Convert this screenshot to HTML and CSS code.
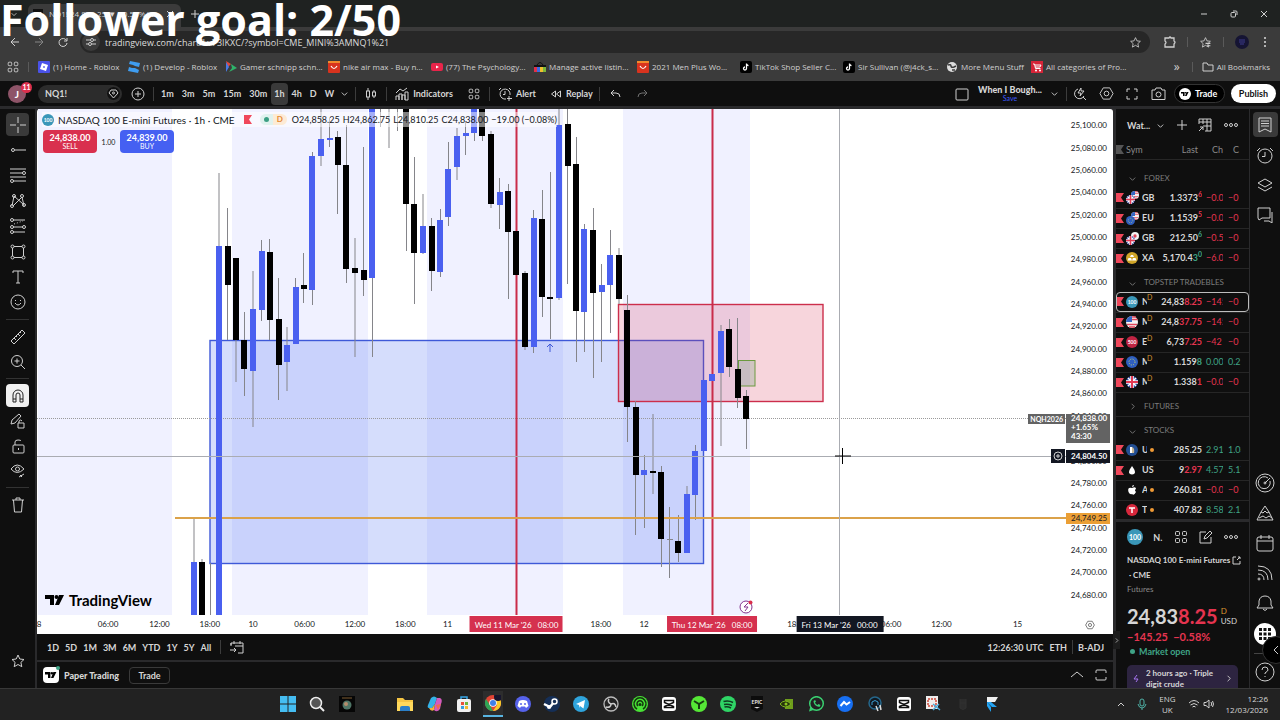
FILE: index.html
```
<!DOCTYPE html>
<html lang="en">
	<head>
		<meta charset="utf-8">
		<title>NQ1! 24,838.25 ▼ −0.58%</title>
		<link rel="stylesheet" href="styles.css">
	</head>
	<body>
		<svg class="defs" width="0" height="0">
			<symbol id="chevron" viewBox="0 0 10 10"><path d="M2 4l3 3 3-3"/></symbol>
			<symbol id="chevron_right" viewBox="0 0 10 10"><path d="M4 2l3 3-3 3"/></symbol>
			<symbol id="dots" viewBox="0 0 16 16"><circle cx="3" cy="8" r="1.5"/><circle cx="8" cy="8" r="1.5"/><circle cx="13" cy="8" r="1.5"/></symbol>
			<symbol id="grid" viewBox="0 0 16 16"><rect x="2.500" y="2.500" width="4" height="4" rx="1"/><rect x="9.500" y="2.500" width="4" height="4" rx="1"/><rect x="2.500" y="9.500" width="4" height="4" rx="1"/><rect x="9.500" y="9.500" width="4" height="4" rx="1"/></symbol>
			<symbol id="star" viewBox="0 0 16 16"><path d="M8 2l1.800 4 4.200.500-3.100 2.900.900 4.300L8 11.500l-3.800 2.200.900-4.300L2 6.500 6.200 6z"/></symbol>
			<symbol id="settings" viewBox="0 0 16 16"><path d="M4.500 2h7L15 8l-3.500 6h-7L1 8z"/><circle cx="8" cy="8" r="2.500"/></symbol>
			<symbol id="tv" viewBox="0 0 20 12"><path d="M0 1h9v10H5V5H0zM14 11h-4l4-10h5z"/><circle cx="11.500" cy="3" r="2"/></symbol>
			<symbol id="flag" viewBox="0 0 8 9"><path d="M0 0h8L5 4.500 8 9H0z"/></symbol>
			<symbol id="tiktok" viewBox="0 0 12 12"><rect width="12" height="12" rx="2" fill="#000"/><path d="M6.500 2.500v5a1.500 1.500 0 1 1-1.500-1.500M6.500 3q.500 1.500 2 1.700" fill="none" stroke="#fff" stroke-width="1.300"/></symbol>
			<symbol id="ali" viewBox="0 0 12 12"><rect width="12" height="12" rx="1" fill="#d8331e"/><path d="M0 0h12v2H0z" fill="#f08a2c"/><path d="M3 5q3 5 6 0" fill="none" stroke="#fff" stroke-width="1.200"/></symbol>
			<symbol id="uk" viewBox="0 0 12 12"><circle cx="6" cy="6" r="6" fill="#2b4aa0"/><path d="M2 2l8 8M10 2l-8 8" stroke="#fff" stroke-width="1.500"/><path d="M6 0v12M0 6h12" stroke="#fff" stroke-width="3.500"/><path d="M6 0v12M0 6h12" stroke="#e23b55" stroke-width="2"/></symbol>
			<symbol id="eu" viewBox="0 0 12 12"><circle cx="6" cy="6" r="6" fill="#2f5fc0"/><circle cx="6" cy="6" r="3" fill="none" stroke="#c9d36a" stroke-width="1" stroke-dasharray="1 1.400"/></symbol>
			<symbol id="us" viewBox="0 0 12 12"><circle cx="6" cy="6" r="6" fill="#f4f4f4"/><path d="M6 1h4M6 3.500h5.500M1 8.500h10M3 11h6" stroke="#e0465a" stroke-width="1.300"/><path d="M6 0v6H0a6 6 0 0 1 6-6" fill="#3567c4"/></symbol>
			<symbol id="jp" viewBox="0 0 12 12"><circle cx="6" cy="6" r="6" fill="#f4f4f4"/><circle cx="6" cy="6" r="2.500" fill="#e0465a"/></symbol>
			<symbol id="capcut" viewBox="0 0 16 16"><rect x="1" y="1" width="14" height="14" rx="3" fill="#fff"/><path d="M12.500 5.500V4.500h-9v2l9 4v1h-9v-1l9-4z" fill="none" stroke="#111" stroke-width="1.500"/></symbol>
		</svg>

		<p class="goal">Follower goal: 2/50</p>

		<div class="tabs">
			<span class="tab_search"><svg width="8" height="8"><use href="#chevron"/></svg></span>
			<div class="tab">
				<span class="tab_icon"><svg width="8" height="6"><use href="#tv"/></svg></span>
				<span class="tab_title">NQ1! 24,838.25 ▼ −0.58% Wi...</span>
				<button class="plain" aria-label="Close tab"><svg width="8" height="8" viewBox="0 0 8 8"><path d="M1 1l6 6M7 1L1 7"/></svg></button>
			</div>
			<button class="plain new_tab" aria-label="New tab"><svg width="8" height="8" viewBox="0 0 8 8"><path d="M4 0v8M0 4h8"/></svg></button>
			<div class="window_buttons">
				<button class="plain" aria-label="Minimise"><svg width="8" height="8" viewBox="0 0 8 8"><path d="M1 4h6"/></svg></button>
				<button class="plain" aria-label="Restore"><svg width="8" height="8" viewBox="0 0 8 8"><rect x="1" y="2.500" width="4.500" height="4.500" rx="1"/><path d="M3 1h3q1 0 1 1v3"/></svg></button>
				<button class="plain" aria-label="Close"><svg width="8" height="8" viewBox="0 0 8 8"><path d="M1 1l6 6M7 1L1 7"/></svg></button>
			</div>
		</div>

		<div class="toolbar">
			<button class="plain" aria-label="Back"><svg width="10" height="10" viewBox="0 0 10 10"><path d="M9 5H1M5 1L1 5l4 4"/></svg></button>
			<button class="plain dim" aria-label="Forward"><svg width="10" height="10" viewBox="0 0 10 10"><path d="M1 5h8M5 1l4 4-4 4"/></svg></button>
			<button class="plain" aria-label="Reload"><svg width="10" height="10" viewBox="0 0 10 10"><path d="M8.500 3.500A4 4 0 1 0 9 6M9 1v3H6"/></svg></button>
			<div class="address">
				<span class="site_info"><svg width="10" height="10" viewBox="0 0 10 10"><path d="M0 3h4M8 3h2M0 7h2M6 7h4"/><circle cx="6" cy="3" r="1.500"/><circle cx="4" cy="7" r="1.500"/></svg></span>
				<input aria-label="Address" value="tradingview.com/chart/Lv73IKXC/?symbol=CME_MINI%3AMNQ1%21">
				<svg width="13" height="13"><use href="#star"/></svg>
			</div>
			<div class="extensions">
				<svg width="12" height="12" viewBox="0 0 12 12"><path d="M1 2h4q1-2 2 0h3v3q2 1 0 3v3H1V8q2-1.500 0-3z" stroke-width="1.300"/></svg>
				<i class="rule"></i>
				<svg width="13" height="13" viewBox="0 0 16 16"><use href="#star"/><path d="M8 9h6M10 12h4" stroke-width="1.500"/></svg>
				<i class="rule"></i>
				<svg width="14" height="14" viewBox="0 0 14 14"><circle cx="7" cy="7" r="7" fill="#151433" stroke="none"/><path d="M4 5h6M4 7h6M5 9h4" stroke="#3d3a8c"/></svg>
				<svg width="4" height="12" viewBox="0 0 4 12"><g fill="#ddd" stroke="none"><circle cx="2" cy="2" r="1"/><circle cx="2" cy="6" r="1"/><circle cx="2" cy="10" r="1"/></g></svg>
			</div>
		</div>

		<nav class="bookmarks">
			<svg class="apps" width="14" height="14"><use href="#grid"/></svg>
			<i class="rule"></i>
			<a href="#"><svg width="12" height="12" viewBox="0 0 12 12"><rect width="12" height="12" rx="1" fill="#4a52e8"/><path d="M4 2l6 2-2 6-6-2z" fill="#fff"/><path d="M5.500 5l1.500.500-.500 1.500L5 6.500z" fill="#4a52e8"/></svg>(1) Home - Roblox</a>
			<a href="#"><svg width="12" height="12" viewBox="0 0 12 12"><path d="M2 0l10 2-1 4-4-1-2-1-4-1zM1 6l3 1h3l4 2-1 3L0 10z" fill="#3f9df0"/></svg>(1) Develop - Roblox</a>
			<a href="#"><svg width="12" height="12" viewBox="0 0 12 12"><path d="M1 0l5 3-3 3z" fill="#e2483d"/><path d="M1 1v10l3-5z" fill="#4a7be8"/><path d="M6 3l6 4-8 4 3-4z" fill="#2fb36a"/></svg>Gamer schnipp schn...</a>
			<a href="#"><svg width="12" height="12"><use href="#ali"/></svg>nike air max - Buy n...</a>
			<a href="#"><svg width="12" height="12" viewBox="0 0 12 12"><rect y="2" width="12" height="8" rx="2" fill="#e8244a"/><path d="M5 4.500l3 1.500-3 1.500z" fill="#fff"/></svg>(77) The Psychology...</a>
			<a href="#"><svg width="12" height="12" viewBox="0 0 12 12"><path d="M0 4h12v2H0z" fill="#111"/><path d="M3 4q3-5 6 0" fill="none" stroke="#111"/><path d="M0 6h3v5H0z" fill="#e0304a"/><path d="M3 6h3v5H3z" fill="#3a6be0"/><path d="M6 6h3v5H6z" fill="#f0c030"/><path d="M9 6h3v5H9z" fill="#7cb83a"/></svg>Manage active listin...</a>
			<a href="#"><svg width="12" height="12"><use href="#ali"/></svg>2021 Men Plus Wo...</a>
			<a href="#"><svg width="12" height="12"><use href="#tiktok"/></svg>TikTok Shop Seller C...</a>
			<a href="#"><svg width="12" height="12"><use href="#tiktok"/></svg>Sir Sullivan (@j4ck_s...</a>
			<a class="short" href="#"><svg width="12" height="12" viewBox="0 0 12 12"><circle cx="6" cy="6" r="5" fill="#ddd"/><path d="M2 4q3-1 3 1t3 1l2-1M6 9l3 0" fill="none" stroke="#3b3b3b" stroke-width="1.500"/></svg>More Menu Stuff</a>
			<a href="#"><svg width="12" height="12" viewBox="0 0 12 12"><rect width="12" height="12" fill="#d62438"/><path d="M2 3h1.500l1 4.500h5M4 4h6L9 6H4" fill="none" stroke="#fff"/><circle cx="5" cy="9.500" r="1" fill="#fff"/><circle cx="9" cy="9.500" r="1" fill="#fff"/></svg>All categories of Pro...</a>
			<span class="more">»</span>
			<i class="rule"></i>
			<a class="all" href="#"><svg class="line" width="12" height="12" viewBox="0 0 12 12"><path d="M1 2h4l1 2h5v6H1z"/></svg>All Bookmarks</a>
		</nav>

		<header class="header">
			<div class="avatar">J<span class="badge">11</span></div>
			<button class="symbol">NQ1!<svg width="15" height="15" viewBox="0 0 15 15"><circle cx="7.500" cy="7.500" r="7" fill="#111" stroke="#333"/><path d="M5 4h5l2 3-4.500 5L3 7z"/><circle cx="7.500" cy="7" r="1"/></svg></button>
			<button class="icon_button" aria-label="Compare"><svg width="14" height="14" viewBox="0 0 14 14"><circle cx="7" cy="7" r="6"/><path d="M7 4v6M4 7h6"/></svg></button>
			<i class="rule"></i>
			<div class="intervals">
				<button>1m</button><button>3m</button><button>5m</button><button>15m</button><button>30m</button><button class="active">1h</button><button>4h</button><button>D</button><button>W</button>
				<button class="more_intervals" aria-label="More intervals"><svg width="9" height="9"><use href="#chevron"/></svg></button>
			</div>
			<i class="rule"></i>
			<button class="icon_button wide" aria-label="Chart type"><svg width="14" height="14" viewBox="0 0 14 14"><rect x="2.500" y="4" width="3" height="6"/><rect x="8.500" y="5" width="3" height="4"/><path d="M4 1v3M4 10v3M10 3v2M10 9v2"/></svg></button>
			<i class="rule"></i>
			<button class="text_button"><svg width="14" height="14" viewBox="0 0 14 14"><path d="M1 13V9h3v4M4 13V7h3v6M7 13V8h3v5M10 13V5h3v8zM1 6l4-4 3 2 4-3"/></svg>Indicators</button>
			<button class="icon_button wide" aria-label="Templates"><svg width="14" height="14"><use href="#grid"/></svg></button>
			<i class="rule"></i>
			<button class="text_button"><svg width="14" height="14" viewBox="0 0 14 14"><path d="M12 8A5 5 0 1 0 8 12M7 4v3.500H5M1 3l2-2M11 1l2 2M11 9v5M9 11.500h5"/></svg>Alert</button>
			<button class="text_button"><svg width="12" height="12" viewBox="0 0 12 12"><path d="M5.500 3v6L1.500 6zM10.500 3v6l-4-3z"/></svg>Replay</button>
			<i class="rule"></i>
			<button class="icon_button wide" aria-label="Undo"><svg width="12" height="12" viewBox="0 0 12 12"><path d="M5 2L2 5l3 3M2 5h5q4 0 4 4"/></svg></button>
			<button class="icon_button dim" aria-label="Redo"><svg width="12" height="12" viewBox="0 0 12 12"><path d="M7 2l3 3-3 3M10 5H5q-4 0-4 4"/></svg></button>
			<div class="header_right">
				<svg width="14" height="14" viewBox="0 0 14 14"><rect x="1" y="2" width="12" height="11" rx="1"/></svg>
				<div class="layout_name"><b>When I Bough...</b><a href="#">Save</a></div>
				<svg width="9" height="9"><use href="#chevron"/></svg>
				<i class="rule"></i>
				<button class="icon_button" aria-label="Quick search"><svg width="14" height="14" viewBox="0 0 14 14"><path d="M5 2a5 5 0 1 0 6 7M10 10l3 3M8 1L5 6h3l-1 3 4-5H8z"/></svg></button>
				<button class="icon_button" aria-label="Settings"><svg width="15" height="15"><use href="#settings"/></svg></button>
				<button class="icon_button" aria-label="Fullscreen"><svg width="12" height="12" viewBox="0 0 12 12"><path d="M1 4V1h3M8 1h3v3M11 8v3H8M4 11H1V8"/></svg></button>
				<button class="icon_button" aria-label="Snapshot"><svg width="15" height="14" viewBox="0 0 15 14"><path d="M1 3h3l1-2h5l1 2h3v9.500H1z"/><circle cx="7.500" cy="7.500" r="2.500"/></svg></button>
				<button class="trade"><span><svg width="8" height="6"><use href="#tv"/></svg></span>Trade</button>
				<button class="publish">Publish</button>
			</div>
		</header>

		<main class="app">
			<aside class="tools">
				<div class="tool_group drawing">
					<button class="active" aria-label="Cross"><svg width="16" height="16" viewBox="0 0 16 16"><path d="M8 0v6M8 10v6M0 8h6M10 8h6"/></svg></button>
					<button aria-label="Trend line"><svg width="16" height="16" viewBox="0 0 16 16"><circle cx="3" cy="8" r="1.500"/><path d="M5 8h11"/></svg></button>
					<button aria-label="Fib"><svg width="16" height="16" viewBox="0 0 16 16"><path d="M0 2h16M0 6h13M0 10h16M3 14h13"/><circle cx="14" cy="6" r="1.500"/><circle cx="2" cy="14" r="1.500"/></svg></button>
					<button aria-label="Patterns"><svg width="16" height="16" viewBox="0 0 16 16"><path d="M2 13L4 3l9 8M3 13l9-9 2 9"/><circle cx="2" cy="13" r="1.500"/><circle cx="4" cy="3" r="1.500"/><circle cx="12" cy="3" r="1.500"/><circle cx="14" cy="12" r="1.500"/></svg></button>
					<button aria-label="Forecast"><svg width="16" height="16" viewBox="0 0 16 16"><path d="M3 2h12M3 9h10M3 14h12"/><path d="M4 6l9-3" stroke-dasharray="1 2"/><circle cx="2" cy="2" r="1.500"/><circle cx="2" cy="9" r="1.500"/><circle cx="14" cy="9" r="1.500"/><circle cx="2" cy="14" r="1.500"/></svg></button>
					<button aria-label="Shapes"><svg width="16" height="16" viewBox="0 0 16 16"><rect x="2.500" y="2.500" width="11" height="11"/><g fill="#0f0f0f"><circle cx="2.500" cy="2.500" r="1.500"/><circle cx="13.500" cy="2.500" r="1.500"/><circle cx="2.500" cy="13.500" r="1.500"/><circle cx="13.500" cy="13.500" r="1.500"/></g></svg></button>
					<button aria-label="Text"><svg width="16" height="16" viewBox="0 0 16 16"><path d="M3 4V2h10v2M8 2v12M6 14h4"/></svg></button>
					<button aria-label="Icons"><svg width="16" height="16" viewBox="0 0 16 16"><circle cx="8" cy="8" r="7"/><path d="M5 9q3 4 6 0M5.500 6v1M10.500 6v1"/></svg></button>
				</div>
				<div class="tool_group">
					<button aria-label="Measure"><svg width="16" height="16" viewBox="0 0 16 16"><path d="M1 12L12 1l3 3L4 15zM4 9l2 2M6 7l1 1M8 5l2 2M10 3l1 1"/></svg></button>
					<button aria-label="Zoom"><svg width="16" height="16" viewBox="0 0 16 16"><circle cx="7" cy="7" r="5.500"/><path d="M11 11l4 4M7 4.500v5M4.500 7h5"/></svg></button>
				</div>
				<div class="tool_group locks">
					<button class="magnet" aria-label="Magnet"><svg width="16" height="16" viewBox="0 0 16 16"><path d="M3 14V7a5 5 0 0 1 10 0v7h-3V7a2 2 0 0 0-4 0v7zM3 11h3M10 11h3"/></svg></button>
					<button aria-label="Stay in drawing mode"><svg width="16" height="16" viewBox="0 0 16 16"><path d="M1 11l1-4 7-6 2 2-6 7zM8 10h6v5H8zM9 10V8q2-2 3 0"/></svg></button>
					<button aria-label="Lock"><svg width="16" height="16" viewBox="0 0 16 16"><rect x="3" y="7" width="11" height="8" rx="1"/><path d="M5 7V4q0-2 3-2t3 1M8.500 10v2" /></svg></button>
					<button aria-label="Hide"><svg width="16" height="16" viewBox="0 0 16 16"><path d="M1 6q6-8 13 0-7 7-13 0zM9 14l5-3M10 12l2 2"/><circle cx="7.500" cy="6" r="2"/></svg></button>
				</div>
				<div class="tool_group">
					<button aria-label="Remove"><svg width="16" height="16" viewBox="0 0 16 16"><path d="M2 3h12M6 3V1h4v2M3.500 3l1 12h7l1-12"/></svg></button>
				</div>
				<button class="favourite" aria-label="Favourites"><svg width="16" height="16"><use href="#star"/></svg></button>
			</aside>

			<div class="center">
				<section class="chart">
					<div class="plot">
						<svg class="canvas" viewBox="37 109 1029 506" preserveAspectRatio="none">
							<path class="session" d="M38 109h134v506h-134zM232 109h136v506h-136zM427 109h136v506h-136zM623 109h127v506h-127z"/>
							<rect class="demand" x="210" y="340.500" width="493.500" height="223"/>
							<rect class="supply" x="618.500" y="304.500" width="204.500" height="97"/>
							<rect class="entry" x="738.500" y="360.500" width="16.500" height="25.500"/>
							<path class="last_price" d="M37 418.500h1029"/>
							<path class="wick" d="M194 518v97M202 559v56M210.500 563v52M219 173v73M227.500 208v132M236 258v124M244.500 312v84M253 271v156M261.500 240v81M269.500 239v101M278.500 278v122M287 327v64M295.500 278v66M303.500 253v50M312.500 152v153M321 109v57M329.500 118v29M337.500 131v83M346.500 125v158M355 238v119M363.500 147v149M372.500 109v248M380.500 109v18M389 109v39M397.500 109v22M406.500 109v142M414.500 157v147M423 194v60M431.500 218v73M440.500 209v68M448.500 142v84M457 128v52M465.500 121v34M474.500 109v32M482.500 109v32M491 131v77M499.500 178v51M508.500 184v115M525 271v79M533.500 210v143M542.500 190v127M550.500 172v167M559 109v191M567.500 109v175M576.500 137v225M584.500 224v128M593.500 208v170M601.500 264v98M610.500 230v103M619 248v56M627.500 295v147M635.500 401v134M644.500 455v73M653 414v80M661.500 466v101M669.500 507v71M678.500 515v47M687 486v12M695.500 445v75M721 325v121M729.500 319v58M737.500 318v90M746.500 390v59M667 539.500h6"/>
							<path class="vline" d="M516.500 109v506M712.500 109v506"/>
							<path class="hline" d="M175 518h891"/>
							<path class="up" d="M194 562v53M219 246v369M253 309v62M262 251v59M287 345v17M296 287v57M312 156v134M321 139v17M330 138v2M372 109v169M423 226v27M440 220v52M448 169v48M457 136v31M466 133v3M474 109v24M500 192v13M534 218v129M559 125v173M584 229v83M602 285v7M610 255v30M644 470v5M687 494v59M695 451v44M704 380v71M712 374v7M721 331v42"/>
							<path class="down" d="M202 562v53M228 246v39M236 258v82M244 340v29M270 252v68M279 319v46M304 285v4M338 137v28M346 165v104M355 268v5M364 270v10M406 109v95M414 204v49M432 226v45M482 109v27M491 134v70M508 191v41M516 231v44M525 273v74M542 219v78M550 297v2M568 124v42M576 164v147M593 230v63M619 255v44M627 310v97M636 407v68M653 471v2M661 472v67M678 541v12M729 329v38M738 369v29M746 396v23"/>
							<path class="crosshair" d="M37 456.500h1029M839.500 109v506"/>
							<path class="arrow" d="M550 352v-8M547 347l3-3 3 3"/>
							<path class="cursor" d="M835 456h16M842.500 448v16"/>
							<g class="event"><circle cx="746" cy="607" r="6"/><path d="M748 603l-4 4h4l-3 4"/><circle class="event_dot" cx="750.500" cy="602.500" r="2"/></g>
						</svg>
						<div class="legend">
							<span class="coin">100</span>
							<b class="legend_title">NASDAQ 100 E-mini Futures · 1h · CME</b>
							<svg class="flag" width="8" height="9"><use href="#flag"/></svg>
							<span class="status"><i></i>D</span>
							<span class="ohlc"><span>O24,858.25</span><span>H24,862.75</span><span>L24,810.25</span><span>C24,838.00</span><span>−19.00 (−0.08%)</span></span>
						</div>
						<div class="orders">
							<button class="sell"><b>24,838.00</b>SELL</button>
							<span>1.00</span>
							<button class="buy"><b>24,839.00</b>BUY</button>
						</div>
						<div class="brand"><svg width="20" height="12"><use href="#tv"/></svg>TradingView</div>
						<span class="contract">NQH2026</span>
						<span class="add_alert"><svg width="10" height="10" viewBox="0 0 10 10"><circle cx="5" cy="5" r="4"/><path d="M5 3v4M3 5h4"/></svg></span>
					</div>
					<div class="price_axis">
						<span>25,100.00</span><span>25,080.00</span><span>25,060.00</span><span>25,040.00</span><span>25,020.00</span><span>25,000.00</span><span>24,980.00</span><span>24,960.00</span><span>24,940.00</span><span>24,920.00</span><span>24,900.00</span><span>24,880.00</span><span>24,860.00</span><span>24,840.00</span><span></span><span>24,800.00</span><span>24,780.00</span><span>24,760.00</span><span>24,740.00</span><span>24,720.00</span><span>24,700.00</span><span>24,680.00</span>
						<div class="price_tag current">24,838.00<br>+1.65%<br>43:30</div>
						<div class="price_tag cross">24,804.50</div>
						<div class="price_tag level">24,749.25</div>
					</div>
					<svg class="time_axis" height="19">
						<text x="0.200%" y="12">8</text><text x="6.900%" y="12">06:00</text><text x="11.900%" y="12">12:00</text><text x="16.800%" y="12">18:00</text><text x="21%" y="12">10</text><text x="26%" y="12">06:00</text><text x="30.900%" y="12">12:00</text><text x="35.800%" y="12">18:00</text><text x="39.900%" y="12">11</text><text x="54.800%" y="12">18:00</text><text x="59%" y="12">12</text><text x="73.900%" y="12">18:00</text><text x="83%" y="12">06:00</text><text x="87.900%" y="12">12:00</text><text x="95.300%" y="12">15</text>
						<svg class="time_tag" x="46.600%"><rect x="-47" y="1" width="93" height="16"/><text y="13">Wed 11 Mar '26 &#160; 08:00</text></svg>
						<svg class="time_tag" x="65.600%"><rect x="-45" y="1" width="90" height="16"/><text y="13">Thu 12 Mar '26 &#160; 08:00</text></svg>
						<svg class="time_tag dark" x="78%"><rect x="-43" y="1" width="87" height="16"/><text y="13">Fri 13 Mar '26 &#160; 00:00</text></svg>
					</svg>
					<div class="axis_settings"><svg width="10" height="10"><use href="#settings"/></svg></div>
				</section>

				<div class="ranges">
					<button>1D</button><button>5D</button><button>1M</button><button>3M</button><button>6M</button><button>YTD</button><button>1Y</button><button>5Y</button><button>All</button>
					<i class="rule"></i>
					<button aria-label="Go to"><svg width="14" height="14" viewBox="0 0 14 14"><path d="M1 6V3h12v10H8M1 3v2M4 1v3M10 1v3M5 6h8M0 10h6M4 8l2 2-2 2"/></svg></button>
					<div class="ranges_right"><button>12:26:30 UTC</button><button>ETH</button><i class="rule"></i><button>B-ADJ</button></div>
				</div>
				<div class="paper">
					<span class="paper_icon"><svg width="12" height="8"><use href="#tv"/></svg><i></i></span>
					<b>Paper Trading</b>
					<button>Trade</button>
					<div class="paper_right">
						<svg width="12" height="12" viewBox="0 0 12 12"><path d="M0 8l6-5 6 5"/></svg>
						<svg width="12" height="12" viewBox="0 0 12 12"><path d="M1 4V2q0-1 1-1h8q1 0 1 1v2M11 8v2q0 1-1 1H2q-1 0-1-1V8"/></svg>
					</div>
				</div>
			</div>

			<aside class="side">
				<div class="watch_header">
					<b>Wat...</b><svg class="list_arrow" width="9" height="9"><use href="#chevron"/></svg>
					<svg width="12" height="12" viewBox="0 0 12 12"><path d="M6 1v10M1 6h10"/></svg>
					<svg width="14" height="14" viewBox="0 0 14 14"><path d="M1 6V1h12v12H7M1 4h12M5 1v5M9 1v12M5 8h8M1 13l4-4M2 9h3v3"/></svg>
					<svg width="16" height="16"><use href="#dots"/></svg>
				</div>
				<table>
					<colgroup><col class="c_flag"><col class="c_icon"><col class="c_name"><col class="c_last"><col class="c_chg"><col class="c_pct"><col></colgroup>
					<thead><tr><th><svg width="8" height="9"><use href="#flag"/></svg></th><th class="sym" colspan="2">Sym</th><th class="last">Last</th><th class="chg">Chg</th><th class="pct">C</th><th></th></tr></thead>
					<tbody>
						<tr class="group open"><td colspan="7"><svg width="9" height="9"><use href="#chevron"/></svg>FOREX</td></tr>
						<tr><td><svg class="flag" width="8" height="9"><use href="#flag"/></svg></td><td><svg width="13" height="13" viewBox="0 0 13 13"><use href="#us" x="5" width="8" height="8"/><use href="#uk" y="4" width="9" height="9"/></svg></td><td>GB</td><td class="last">1.3373<sup class="red">6</sup></td><td class="chg red">−0.00</td><td class="pct red">−0</td><td></td></tr>
						<tr><td><svg class="flag" width="8" height="9"><use href="#flag"/></svg></td><td><svg width="13" height="13" viewBox="0 0 13 13"><use href="#us" x="5" width="8" height="8"/><use href="#eu" y="4" width="9" height="9"/></svg></td><td>EU</td><td class="last">1.1539<sup class="red">5</sup></td><td class="chg red">−0.00</td><td class="pct red">−0</td><td></td></tr>
						<tr><td><svg class="flag" width="8" height="9"><use href="#flag"/></svg></td><td><svg width="13" height="13" viewBox="0 0 13 13"><use href="#jp" x="5" width="8" height="8"/><use href="#uk" y="4" width="9" height="9"/></svg></td><td>GB</td><td class="last">212.50<sup class="green">6</sup></td><td class="chg red">−0.57</td><td class="pct red">−0</td><td></td></tr>
						<tr><td><svg class="flag" width="8" height="9"><use href="#flag"/></svg></td><td><svg width="12" height="12" viewBox="0 0 12 12"><circle cx="6" cy="6" r="6" fill="#d0a528"/><path d="M4 5l1-2h2l1 2zM1.500 8.500l1-2.500h2.500l1 2.500zM6 8.500l1-2.500h2.500l1 2.500z" fill="#fff"/></svg></td><td>XA</td><td class="last">5,170.4<span class="green">3<sup>0</sup></span></td><td class="chg red">−6.00</td><td class="pct red">−0</td><td></td></tr>
						<tr class="group"><td colspan="7"><svg width="9" height="9"><use href="#chevron"/></svg>TOPSTEP TRADEBLES</td></tr>
						<tr class="selected"><td><svg class="flag" width="8" height="9"><use href="#flag"/></svg></td><td><span class="coin">100</span></td><td><span class="cut">N</span><sup class="delay">D</sup></td><td class="last">24,83<span class="red">8.25</span></td><td class="chg red">−145</td><td class="pct red">−0</td><td></td></tr>
						<tr><td><svg class="flag" width="8" height="9"><use href="#flag"/></svg></td><td><svg width="12" height="12"><use href="#us"/></svg></td><td><span class="cut">M</span><sup class="delay">D</sup></td><td class="last">24,8<span class="red">37.75</span></td><td class="chg red">−145</td><td class="pct red">−0</td><td></td></tr>
						<tr><td><svg class="flag" width="8" height="9"><use href="#flag"/></svg></td><td><span class="coin sp">500</span></td><td><span class="cut">E</span><sup class="delay">D</sup></td><td class="last">6,73<span class="red">7.25</span></td><td class="chg red">−42</td><td class="pct red">−0</td><td></td></tr>
						<tr><td><svg class="flag" width="8" height="9"><use href="#flag"/></svg></td><td><svg width="12" height="12"><use href="#eu"/></svg></td><td><span class="cut">M</span><sup class="delay">D</sup></td><td class="last">1.159<span class="green">8</span></td><td class="chg green">0.000</td><td class="pct green">0.2</td><td></td></tr>
						<tr><td><svg class="flag" width="8" height="9"><use href="#flag"/></svg></td><td><svg width="12" height="12"><use href="#uk"/></svg></td><td><span class="cut">M</span><sup class="delay">D</sup></td><td class="last">1.338<span class="red">1</span></td><td class="chg red">−0.00</td><td class="pct red">−0</td><td></td></tr>
						<tr class="group closed"><td colspan="7"><svg width="9" height="9"><use href="#chevron_right"/></svg>FUTURES</td></tr>
						<tr class="group"><td colspan="7"><svg width="9" height="9"><use href="#chevron"/></svg>STOCKS</td></tr>
						<tr><td><svg class="flag" width="8" height="9"><use href="#flag"/></svg></td><td><svg width="12" height="12" viewBox="0 0 12 12"><circle cx="6" cy="6" r="6" fill="#234f94"/><path d="M4 3h2v6H4z" fill="#fff"/><path d="M6 3q3 1 2 6H6z" fill="#c8b896"/></svg></td><td><span class="cut">U</span><i class="dot"></i></td><td class="last">285.25</td><td class="chg green">2.910</td><td class="pct green">1.03</td><td></td></tr>
						<tr><td><svg class="flag" width="8" height="9"><use href="#flag"/></svg></td><td><svg width="12" height="12" viewBox="0 0 12 12"><path d="M6 2q6 8 0 8.500Q0 10 6 2" fill="#fff"/></svg></td><td>US</td><td class="last">9<span class="red">2.97</span></td><td class="chg green">4.570</td><td class="pct green">5.17</td><td></td></tr>
						<tr><td></td><td><svg width="12" height="12" viewBox="0 0 12 12"><path d="M6 4q4-2 4 1-2 1 0 3-2 4-4 2-2 1-3.500-2Q1 3 6 4M6 3q0-2 2-2 0 2-2 2" fill="#fff"/></svg></td><td><span class="cut">A</span><i class="dot"></i></td><td class="last">260.81</td><td class="chg red">−0.02</td><td class="pct red">−0</td><td></td></tr>
						<tr><td></td><td><svg width="12" height="12" viewBox="0 0 12 12"><circle cx="6" cy="6" r="6" fill="#d8273c"/><path d="M3 4h6M6 4v5" stroke="#fff" stroke-width="1.500"/></svg></td><td><span class="cut">T</span><i class="dot"></i></td><td class="last">407.82</td><td class="chg green">8.580</td><td class="pct green">2.15</td><td></td></tr>
					</tbody>
				</table>
				<div class="details">
					<div class="details_header">
						<span class="coin big">100</span><b>N.</b>
						<svg width="16" height="16"><use href="#grid"/></svg>
						<svg width="14" height="14" viewBox="0 0 14 14"><path d="M7 2H1v11h11V7M5 9l1-3 5-5 2 2-5 5z"/></svg>
						<svg width="16" height="16"><use href="#dots"/></svg>
					</div>
					<p class="details_name">NASDAQ 100 E-mini Futures <svg width="9" height="9" viewBox="0 0 9 9"><path d="M4 1H1v7h7V5M6 1h2v2M8 1L5 4"/></svg></p>
					<p class="details_name">&nbsp;· CME</p>
					<p class="details_type">Futures</p>
					<p class="quote">24,83<span class="red">8.25</span><small><i>D</i>USD</small></p>
					<p class="change red">−145.25 &nbsp;−0.58%</p>
					<p class="market green"><i></i>Market open</p>
					<a class="news" href="#"><svg width="9" height="9" viewBox="0 0 9 9"><path d="M5 1L2 5h4L4 8"/></svg><span>2 hours ago · Triple digit crude</span><svg width="9" height="9"><use href="#chevron_right"/></svg></a>
				</div>
				<button class="collapse" aria-label="Collapse"><svg width="7" height="7"><use href="#chevron_right"/></svg></button>
			</aside>

			<aside class="rail">
				<button class="active" aria-label="Watchlist"><svg width="16" height="16" viewBox="0 0 16 16"><path d="M2 1h12v14l-6-3-6 3zM4 4h8M4 6.500h8M4 9h8"/></svg></button>
				<button aria-label="Alerts"><svg width="18" height="18" viewBox="0 0 18 18"><circle cx="9" cy="10" r="7"/><path d="M9 6v4.500H6M1 5l3-3M14 2l3 3"/></svg></button>
				<button aria-label="Object tree"><svg width="16" height="16" viewBox="0 0 16 16"><path d="M8 2l7 4-7 4-7-4zM1 10l7 4 7-4"/></svg></button>
				<button aria-label="Chats"><svg width="16" height="16" viewBox="0 0 16 16"><path d="M1 1h12v10H5l-3 2-1-2zM15 5v11l-3-2H7"/></svg></button>
				<button class="push" aria-label="Screeners"><svg width="20" height="20" viewBox="0 0 20 20"><circle cx="10" cy="10" r="9"/><path d="M13 5a6 6 0 1 0 2 3M10 10l5-5"/><circle cx="10" cy="10" r="1"/></svg></button>
				<button aria-label="Pine"><svg width="18" height="18" viewBox="0 0 18 18"><path d="M9 2l4 6-2 1-2-2-2 2-2-1zM5 8l-4 8h16l-4-8M3 14l4-2 3 2 3-2 3 2"/></svg></button>
				<button aria-label="Calendar"><svg width="18" height="18" viewBox="0 0 18 18"><rect x="1" y="3" width="16" height="14" rx="2"/><path d="M1 7h16M5 1v4M13 1v4"/></svg></button>
				<button aria-label="News"><svg width="16" height="16" viewBox="0 0 16 16"><circle cx="2" cy="14" r="1"/><path d="M1 9q6 0 6 6M1 5q10 0 10 10M1 1q14 0 14 14"/></svg></button>
				<button aria-label="Notifications"><svg width="18" height="18" viewBox="0 0 18 18"><path d="M1 14l2-3V7q1-5 6-5t6 5v4l2 3zM7 15q2 3 4 0"/></svg></button>
				<button class="products" aria-label="Products"><svg width="14" height="14" viewBox="0 0 14 14"><path d="M2.500 1v12M7 1v12M11.500 1v12" stroke-width="3" stroke-dasharray="3 1.500"/></svg></button>
				<i></i>
				<button aria-label="Help"><svg width="20" height="20" viewBox="0 0 20 20"><circle cx="10" cy="10" r="9"/><path d="M7 8q0-3 3-3t3 3q0 1-3 3v1M10 14v1"/></svg></button>
				<span class="drawer"><svg width="10" height="10" viewBox="0 0 10 10"><path d="M7 1L3 5l4 4"/></svg></span>
			</aside>
		</main>

		<footer class="taskbar">
			<div class="apps_list">
				<svg viewBox="0 0 16 16"><path d="M0 0h7.500v7.500H0zM8.500 0H16v7.500H8.500zM0 8.500h7.500V16H0zM8.500 8.500H16V16H8.500z" fill="#45bdf2"/></svg>
				<svg viewBox="0 0 16 16"><circle cx="7" cy="7" r="5.500" fill="#555" stroke="#eee" stroke-width="1.500"/><path d="M11 11l4 4" stroke="#eee" stroke-width="2"/></svg>
				<svg viewBox="0 0 16 16"><path d="M0 0h16v16H0z" fill="#060606"/><circle cx="8" cy="9" r="4.500" fill="#4f7566"/><circle cx="7" cy="8" r="2" fill="#b58d6c"/><path d="M3 2h10" stroke="#7d5a30"/></svg>
				<span></span>
				<svg viewBox="0 0 16 16"><path d="M0 2h6l2 2h8v11H0z" fill="#f5c544"/><path d="M0 6h16v9H0z" fill="#ffd95c"/><path d="M3 15v-3q0-2 2-2h6q2 0 2 2v3z" fill="#2b7fc8"/></svg>
				<svg viewBox="0 0 16 16"><path d="M4 2q3-3 6 0L8 8l-3 4H2Q0 12 1 9z" fill="#34b2e8"/><path d="M10 2h3q3 1 1 6l-1 5q-3 4-6 1l1-6z" fill="#d35bbd"/><path d="M2 12h3l3-4-1 6q-3 2-5-2" fill="#f2b33d"/><path d="M9 9l5-1-3 6z" fill="#f26a4b"/></svg>
				<svg viewBox="0 0 16 16"><path d="M5 4V1h6v3" fill="none" stroke="#38a8e8" stroke-width="1.500"/><rect x="1" y="3" width="14" height="13" rx="2" fill="#f0f0f0"/><path d="M5 6h3v3H5z" fill="#e8503a"/><path d="M9 6h3v3H9z" fill="#6bb83c"/><path d="M5 10h3v3H5z" fill="#38a0e0"/><path d="M9 10h3v3H9z" fill="#f2b82c"/></svg>
				<span class="running"><svg viewBox="0 0 16 16"><circle cx="8" cy="8" r="8" fill="#e24333"/><path d="M1 4l4 6 3 6a8 8 0 0 1-7-12" fill="#2fa455"/><path d="M8 16a8 8 0 0 0 7.500-11H8l4 5z" fill="#f7c92c"/><circle cx="8" cy="8" r="3.800" fill="#fff"/><circle cx="8" cy="8" r="3" fill="#3f7fe8"/><circle cx="13" cy="2" r="4" fill="#17152e"/></svg></span>
				<svg viewBox="0 0 16 16"><circle cx="8" cy="8" r="8" fill="#5662ea"/><path d="M4 5q4-2 8 0l1.500 5L11 12l-1-1.500H6L5 12l-2.500-2z" fill="#fff"/><circle cx="6" cy="8" r="1" fill="#5662ea"/><circle cx="10" cy="8" r="1" fill="#5662ea"/></svg>
				<svg viewBox="0 0 16 16"><circle cx="8" cy="8" r="8" fill="#152f57"/><path d="M0 8l6 3 4-5" fill="none" stroke="#fff" stroke-width="2.500"/><circle cx="10.500" cy="5.500" r="2.500" fill="#152f57" stroke="#fff" stroke-width="1.500"/><circle cx="5" cy="11" r="2" fill="#fff"/></svg>
				<svg viewBox="0 0 16 16"><circle cx="8" cy="8" r="8" fill="#2fa4dc"/><path d="M3 8l9-4-1.500 8.500L7 10l-.500 2L6 9z" fill="#fff"/></svg>
				<svg viewBox="0 0 16 16"><circle cx="8" cy="8" r="7" fill="#242424" stroke="#bbb" stroke-width="1.300"/><path d="M8 8Q4 6 6 3M8 8q0 4-5 3M8 8q4-2 5 3" fill="none" stroke="#ccc" stroke-width="1.500"/></svg>
				<svg viewBox="0 0 16 16"><circle cx="8" cy="8" r="8" fill="#48e135"/><path d="M5 13a6 6 0 1 1 6 0M6 10a3 3 0 1 1 4 0" fill="none" stroke="#14350f" stroke-width="1.500"/><circle cx="8" cy="8.500" r="1.500" fill="#14350f"/></svg>
				<svg viewBox="0 0 16 16"><use href="#capcut"/></svg>
				<svg viewBox="0 0 16 16"><circle cx="8" cy="8" r="8" fill="#55e736"/><path d="M3 5l5 3 5-3M8 8v5" fill="none" stroke="#183e12" stroke-width="2"/></svg>
				<svg viewBox="0 0 16 16"><circle cx="8" cy="8" r="8" fill="#2fd566"/><path d="M3.500 5.500q5-1.500 9.500 1M4 8.500q4-1 8 1M4.500 11q3-1 6.500 1" fill="none" stroke="#103d20" stroke-width="1.500"/></svg>
				<svg viewBox="0 0 16 16"><path d="M2 0h12v13l-6 3-6-3z" fill="#0c0c0c"/><text x="8" y="8" font-size="5" font-weight="700" text-anchor="middle" fill="#eee">EPIC</text><path d="M5 11h6l-3 1.500z" fill="#ddd"/></svg>
				<svg viewBox="0 0 16 16"><path d="M6 3h8v10H6z" fill="#6f9e1c"/><path d="M1 8q5-6 11 0-6 6-11 0" fill="#26330c" stroke="#7fb51e"/><circle cx="7" cy="8" r="1.500" fill="#8bc320"/></svg>
				<svg viewBox="0 0 16 16"><circle cx="8.500" cy="7.500" r="6.800" fill="#222" stroke="#3ad070" stroke-width="1.500"/><path d="M1 15.500L2.500 10l3 4z" fill="#3ad070"/><path d="M5.500 5q0 5 6 6l1-2-2-1-1 1q-2-1-2.500-2.500l1-1L7 4z" fill="#3ad070"/></svg>
				<svg viewBox="0 0 16 16"><circle cx="8" cy="8" r="8" fill="#176ff2"/><path d="M3.500 10L7 6l2.500 2.500L13 6" fill="none" stroke="#fff" stroke-width="2"/></svg>
				<svg viewBox="0 0 16 16"><circle cx="8" cy="7" r="6" fill="#101820" stroke="#25678c" stroke-width="1.500"/><path d="M5 9V6q3-3 6 0v3" fill="none" stroke="#3a9ad0"/><path d="M9 10l2 5M13 9l1 5" stroke="#ddd" stroke-width="1.500"/></svg>
				<svg viewBox="0 0 16 16"><use href="#capcut"/></svg>
				<svg viewBox="0 0 16 16"><path d="M1 0h12v13H1z" fill="#eee"/><path d="M3 3h8v7H3z" fill="none" stroke="#d04a3a" stroke-width="1.500" stroke-dasharray="2 1"/><path d="M8 8l7 6M14 8l-6 6" stroke="#4aa8d8" stroke-width="1.500"/></svg>
				<svg viewBox="0 0 16 16"><path d="M5 3v4h6V3M5 7v5q3 3 6 0V7" fill="#2c2c2c" stroke="#303030"/></svg>
				<svg viewBox="0 0 16 16"><path d="M3 1h11L11 6H3z" fill="#f0f0f0"/><path d="M3 6h4l6 5H8L3 6v4l4 6v-5z" fill="#23a5f5"/></svg>
			</div>
			<div class="tray">
				<svg width="8" height="8" viewBox="0 0 8 8"><path d="M1 6l3-3 3 3"/></svg>
				<svg class="mic" width="10" height="12" viewBox="0 0 10 12"><rect x="3" y="1" width="4" height="7" rx="2"/><path d="M1 6q1 4 4 4t4-4M5 10v2"/></svg>
				<span>ENG<br>UK</span>
				<svg width="26" height="12" viewBox="0 0 26 12"><path d="M1 5q5-5 10 0M2.500 7q3.500-3 7 0M4.500 9q1.500-1.500 3 0M16 4.500h2l3-2.500v8l-3-2.500h-2zM23 4q1.500 2 0 4M24.500 3q2 3 0 6"/></svg>
				<span class="clock">12:26<br>12/03/2026</span>
			</div>
		</footer>
	</body>
</html>
```
FILE: styles.css
```
* {
	box-sizing: border-box;
}
html {
	height: 100%;
}
body {
	display: flex;
	flex-direction: column;
	height: 100%;
	margin: 0;
	overflow: hidden;
	background: #2a2a2c;
	color: #d6d6d6;
	font-family: Lato, sans-serif;
	font-size: 9px;
}
p {
	margin: 0;
}
a {
	color: inherit;
	text-decoration: none;
}
button {
	padding: 0;
	border: 0;
	background: none;
	color: inherit;
	font: inherit;
	white-space: nowrap;
}
svg {
	flex: none;
	fill: none;
	stroke: #d0d0d0;
	stroke-width: 1;
}
.defs {
	position: absolute;
}
.rule {
	flex: none;
	width: 1px;
	height: 14px;
	background: #3c3c3c;
}
.red {
	color: #e5344f;
}
.green {
	color: #3fa386;
}
.dim {
	opacity: 0.5;
}
.goal {
	position: absolute;
	top: -5px;
	left: 0;
	z-index: 5;
	color: white;
	font-family: "Open Sans", sans-serif;
	font-size: 43px;
	font-weight: 700;
	line-height: 50px;
	white-space: nowrap;
}

/* browser */
.tabs,
.toolbar,
.bookmarks {
	font-family: "Open Sans", sans-serif;
	font-size: 8px;
}
.tabs {
	display: flex;
	align-items: center;
	height: 27px;
	background: #1f2221;
}
.plain {
	display: flex;
}
.tab_search {
	display: flex;
	justify-content: center;
	width: 28px;
}
.tab {
	display: flex;
	align-items: center;
	gap: 6px;
	width: 153px;
	height: 23px;
	margin-top: 4px;
	padding: 0 7px 4px 5px;
	border-radius: 6px 6px 0 0;
	background: #3b3b3b;
}
.tab_icon {
	display: flex;
	padding: 2px 1px;
	background: #111;
}
.tab_icon svg,
.trade svg {
	fill: currentColor;
	stroke: none;
}
.tab_title {
	flex: 1;
	overflow: hidden;
	white-space: nowrap;
}
.new_tab {
	margin-left: 10px;
}
.window_buttons {
	display: flex;
	gap: 22px;
	margin-left: auto;
	padding-right: 12px;
}
.toolbar {
	display: flex;
	align-items: center;
	gap: 14px;
	height: 30px;
	padding: 0 13px 0 10px;
	background: #3b3b3b;
}
.toolbar > .plain {
	width: 10px;
}
.address {
	display: flex;
	flex: 1;
	align-items: center;
	height: 22px;
	margin-left: -2px;
	padding: 0 8px 0 2px;
	border-radius: 11px;
	background: #272727;
}
.site_info {
	display: flex;
	padding: 4px;
	border-radius: 50%;
	background: #3b3b3b;
}
.address input {
	flex: 1;
	margin-left: 5px;
	padding: 0;
	border: 0;
	background: none;
	color: #dcdcdc;
	font: inherit;
	font-size: 9px;
}
.extensions {
	display: flex;
	align-items: center;
	gap: 11px;
	height: 12px;
}
.extensions svg:last-child {
	margin-left: 3px;
}
.bookmarks .rule,
.extensions .rule {
	height: 10px;
	background: #5a5a5a;
}
.bookmarks {
	display: flex;
	align-items: center;
	height: 24px;
	padding: 0 10px 5px 6px;
	background: #3b3b3b;
	color: #d0d0d0;
}
.bookmarks a {
	display: flex;
	align-items: center;
	gap: 3px;
	width: 103px;
	white-space: nowrap;
}
.bookmarks a svg {
	stroke: none;
}
.bookmarks a svg.line {
	stroke: #d0d0d0;
}
.bookmarks .apps {
	margin-right: 8px;
}
.bookmarks .rule {
	margin-right: 9px;
}
.bookmarks a:nth-of-type(1) {
	width: 90px;
}
.bookmarks a:nth-of-type(2) {
	width: 97px;
}
.bookmarks .short {
	width: 85px;
}
.more {
	margin: 0 12px 0 auto;
	font-size: 12px;
}
.bookmarks .all {
	width: auto;
}

/* chart header */
.header {
	display: flex;
	align-items: center;
	height: 25px;
	margin-bottom: 3px;
	padding-right: 4px;
	background: #0f0f0f;
	font-weight: 700;
}
.avatar {
	position: relative;
	width: 18px;
	height: 18px;
	margin: 0 12px 0 8px;
	border-radius: 50%;
	background: #8e5468;
	color: white;
	font-size: 10px;
	line-height: 18px;
	text-align: center;
}
.badge {
	position: absolute;
	top: -3px;
	right: -6px;
	width: 11px;
	height: 11px;
	border-radius: 50%;
	background: #dc2f4c;
	font-size: 7px;
	line-height: 11px;
}
.symbol {
	display: flex;
	align-items: center;
	justify-content: space-between;
	width: 84px;
	height: 18px;
	padding: 0 1px 0 7px;
	border-radius: 9px;
	background: #2c2c2c;
}
.icon_button {
	display: flex;
	justify-content: center;
	width: 26px;
}
.icon_button.wide {
	width: 30px;
}
.symbol + .icon_button {
	width: 31px;
}
.intervals {
	display: flex;
	margin: 0 4px 0 3px;
}
.intervals button {
	display: flex;
	align-items: center;
	height: 22px;
	padding: 0 4px;
	border-radius: 4px;
}
.intervals .active {
	padding: 0 3px;
	background: #3a3a3a;
}
.intervals .more_intervals {
	padding: 0 2px;
}
.text_button {
	display: flex;
	align-items: center;
	gap: 4px;
	padding: 0 6px 0 8px;
}
.header_right {
	display: flex;
	align-items: center;
	margin-left: auto;
}
.layout_name {
	display: flex;
	flex-direction: column;
	align-items: center;
	width: 64px;
	margin: 0 8px 0 9px;
	line-height: 10px;
	white-space: nowrap;
}
.layout_name a {
	color: #3d5afe;
	font-size: 7px;
	font-weight: 400;
	line-height: 7px;
}
.header_right .rule {
	margin-left: 7px;
}
.trade,
.publish {
	height: 19px;
	border-radius: 10px;
}
.trade {
	display: flex;
	align-items: center;
	gap: 4px;
	width: 51px;
	margin: 0 6px 0 3px;
	padding-left: 4px;
	border: 1px solid #333;
	background: black;
	color: white;
}
.trade span {
	display: flex;
	padding: 3px 2px;
	border-radius: 50%;
	background: white;
	color: black;
}
.publish {
	width: 45px;
	background: white;
	color: #111;
}

.app {
	display: flex;
	flex: 1;
	min-height: 0;
}

/* drawing tools */
.tools {
	display: flex;
	flex-direction: column;
	align-items: center;
	width: 35px;
	margin-right: 2px;
	padding: 4px 0 16px;
	background: #0f0f0f;
}
.tools button {
	display: flex;
	align-items: center;
	justify-content: center;
	width: 23px;
	height: 23px;
	border-radius: 4px;
}
.tool_group {
	display: flex;
	flex-direction: column;
	gap: 2px;
	padding-bottom: 5px;
}
.tool_group + .tool_group {
	padding-top: 5px;
	border-top: 1px solid #333;
}
.drawing {
	justify-content: space-between;
	height: 206px;
}
.tools .active {
	background: #3a3a3a;
}
.tools .magnet {
	background: #f0f0f0;
}
.magnet svg {
	stroke: #222;
}
.tools .favourite {
	margin-top: auto;
}

.center {
	display: flex;
	flex: 1;
	flex-direction: column;
	min-width: 0;
}
.chart {
	display: grid;
	flex: 1;
	grid-template-columns: 1fr 47px;
	grid-template-rows: 1fr 19px;
	min-height: 0;
	border-radius: 3px 3px 0 0;
	background: white;
	color: #131722;
	font-size: 8px;
}
.plot {
	position: relative;
	min-height: 0;
}
.canvas {
	position: absolute;
	width: 100%;
	height: 100%;
}
.session {
	fill: #f0f1ff;
	stroke: none;
}
.demand {
	fill: rgba(64, 100, 240, 0.22);
	stroke: #3e59d8;
	stroke-width: 1.4;
}
.supply {
	fill: rgba(215, 45, 80, 0.2);
	stroke: #cc2e4b;
	stroke-width: 1.4;
}
.entry {
	fill: rgba(90, 150, 110, 0.25);
	stroke: #6c9a3f;
}
.wick {
	stroke: #85858a;
}
.up,
.down {
	stroke: #4a60f0;
	stroke-width: 6;
}
.down {
	stroke: black;
}
.vline {
	stroke: #c92c4a;
	stroke-width: 2;
}
.hline {
	stroke: #dba24a;
	stroke-width: 2;
}
.crosshair {
	stroke: #aaacb2;
}
.last_price {
	stroke: #9a9a9a;
	stroke-dasharray: 1 1;
}
.arrow {
	stroke: #3e59d8;
}
.cursor {
	stroke: black;
}
.event {
	fill: white;
	stroke: #84358f;
}
.event_dot {
	fill: #d9304e;
	stroke: none;
}
.legend {
	position: absolute;
	top: 3px;
	left: 5px;
	display: flex;
	align-items: center;
	height: 15px;
	background: rgba(255, 255, 255, 0.5);
	white-space: nowrap;
}
.coin {
	display: block;
	width: 12px;
	height: 12px;
	border-radius: 50%;
	background: #3a97b8;
	color: white;
	font-size: 5px;
	font-weight: 700;
	line-height: 12px;
	text-align: center;
}
.coin.sp {
	background: #c02443;
}
.coin.big {
	width: 16px;
	height: 16px;
	font-size: 7px;
	line-height: 16px;
}
.legend_title {
	margin: 0 9px 0 4px;
	font-size: 10px;
	font-weight: 400;
}
.flag {
	fill: #f0485b;
	stroke: none;
}
.status {
	display: flex;
	align-items: center;
	gap: 8px;
	margin: 0 5px 0 8px;
	padding: 0 4px;
	border-radius: 6px;
	background: linear-gradient(90deg, #e0f2ee 50%, #fdebd5 50%);
	color: #e58a35;
	font-weight: 700;
	line-height: 11px;
}
.status i {
	width: 5px;
	height: 5px;
	border-radius: 50%;
	background: #3b9f83;
}
.ohlc {
	display: flex;
	gap: 3px;
	font-size: 9px;
}
.orders {
	position: absolute;
	top: 21px;
	left: 6px;
	display: flex;
	align-items: center;
	font-size: 7px;
}
.orders button {
	width: 54px;
	height: 23px;
	border-radius: 4px;
	background: #d9304e;
	color: white;
	line-height: 9px;
}
.orders .buy {
	background: #4560f2;
}
.orders b {
	display: block;
	font-size: 9px;
}
.orders span {
	width: 23px;
	text-align: center;
}
.brand {
	position: absolute;
	bottom: 7px;
	left: 8px;
	display: flex;
	align-items: center;
	gap: 4px;
	color: black;
	font-size: 15px;
	font-weight: 700;
	line-height: 16px;
}
.brand svg,
.paper_icon svg {
	fill: black;
	stroke: none;
}
.contract {
	position: absolute;
	top: 305px;
	right: 1px;
	padding: 0 2px;
	background: #636363;
	color: white;
	font-size: 7px;
	font-weight: 700;
	line-height: 10px;
}
.add_alert {
	position: absolute;
	top: 340px;
	right: 1px;
	display: flex;
	padding: 2px;
	background: #131722;
}
.price_axis {
	position: relative;
	display: flex;
	flex-direction: column;
	padding: 5px 6px 9px 0;
}
.price_axis span {
	display: flex;
	flex: 1;
	align-items: center;
	justify-content: flex-end;
}
.price_tag {
	position: absolute;
	right: 3px;
	left: 0;
	padding-left: 5px;
	color: white;
	font-weight: 700;
	line-height: 13px;
}
.price_tag.current {
	top: 305px;
	padding-bottom: 2px;
	background: #636363;
	line-height: 9px;
}
.price_tag.cross {
	top: 341px;
	background: #131722;
}
.price_tag.level {
	top: 404px;
	background: #eb9f35;
	color: #131722;
	font-weight: 400;
	line-height: 11px;
}
.time_axis {
	width: 100%;
	fill: #131722;
	stroke: none;
	text-anchor: middle;
}
.time_axis svg {
	overflow: visible;
	fill: white;
	stroke: none;
}
.time_tag rect {
	fill: #d5314f;
}
.dark rect {
	fill: #131722;
}
.axis_settings {
	display: flex;
	align-items: center;
	justify-content: center;
}
.axis_settings svg {
	stroke: #333;
}

.ranges,
.paper {
	display: flex;
	align-items: center;
	height: 26px;
	padding: 0 6px;
	background: #0f0f0f;
	font-weight: 700;
}
.ranges {
	margin-bottom: 2px;
	padding-left: 7px;
}
.ranges button {
	display: flex;
	padding: 0 3px;
}
.ranges > .rule {
	margin: 0 6px;
}
.ranges_right,
.paper_right {
	display: flex;
	align-items: center;
	margin-left: auto;
}
.ranges_right .rule {
	margin: 0 2px;
}
.paper_icon {
	position: relative;
	display: flex;
	margin-right: 5px;
	padding: 4px 2px;
	border-radius: 4px;
	background: white;
}
.paper_icon i {
	position: absolute;
	top: -1px;
	right: -1px;
	width: 4px;
	height: 4px;
	border-radius: 50%;
	background: #3fa386;
}
.paper button {
	width: 41px;
	height: 17px;
	margin-left: 10px;
	border: 1px solid #3a3a3a;
	border-radius: 4px;
}
.paper_right {
	gap: 12px;
}

/* watchlist */
.side {
	position: relative;
	display: flex;
	flex-direction: column;
	width: 133px;
	margin-left: 3px;
	background: #0f0f0f;
}
.watch_header {
	display: flex;
	align-items: center;
	justify-content: space-between;
	height: 32px;
	padding: 0 10px 0 11px;
}
.list_arrow {
	margin-left: -5px;
}
table {
	width: 100%;
	border-collapse: collapse;
	border-bottom: 3px solid #2a2a2c;
	table-layout: fixed;
	font-weight: 700;
}
.c_flag {
	width: 9px;
}
.c_icon,
.c_name {
	width: 17px;
}
.c_last {
	width: 43px;
}
.c_chg {
	width: 21px;
}
.c_pct {
	width: 18px;
}
th,
td {
	height: 20px;
	padding: 0;
	overflow: hidden;
	border-bottom: 1px solid #262626;
	line-height: 12px;
	text-align: left;
	white-space: nowrap;
}
td svg,
th svg {
	display: block;
	stroke: none;
}
td .coin,
td:nth-child(2) svg {
	margin-left: 1px;
}
.last {
	text-align: right;
}
.chg {
	padding-left: 4px;
	font-weight: 400;
}
.pct {
	padding-left: 5px;
	font-weight: 400;
}
th {
	height: 18px;
	color: #8a8a8a;
	font-weight: 400;
}
th svg {
	fill: #555;
}
th.sym {
	padding-left: 1px;
}
th.last {
	padding-right: 4px;
}
th.chg {
	padding-left: 10px;
}
th.pct {
	padding-left: 10px;
}
sup {
	font-size: 7px;
	line-height: 1px;
}
.delay {
	color: #d99530;
	font-weight: 400;
}
.cut {
	display: inline-block;
	width: 5px;
	overflow: hidden;
	vertical-align: middle;
}
.dot {
	display: inline-block;
	width: 4px;
	height: 4px;
	margin-left: 3px;
	border-radius: 50%;
	background: #f09a35;
	vertical-align: middle;
}
.group td {
	height: 24px;
	padding: 4px 0 0 12px;
	border-bottom: 0;
	color: #7c7c7c;
	font-size: 8px;
	font-weight: 400;
}
.group.open td {
	height: 29px;
	padding-top: 8px;
}
.group.closed td {
	border-bottom: 1px solid #262626;
}
.group svg {
	display: inline-block;
	margin-right: 7px;
	stroke: #7c7c7c;
	vertical-align: middle;
}
.selected {
	border-radius: 4px;
	outline: 1px solid #bdbdbd;
	outline-offset: -1px;
}
.details {
	flex: 1;
	min-height: 0;
	padding: 0 11px;
	overflow: hidden;
}
.details_header {
	display: flex;
	align-items: center;
	justify-content: space-between;
	height: 31px;
	margin-right: -1px;
}
.details_name {
	font-size: 8px;
	font-weight: 700;
	line-height: 15px;
	white-space: nowrap;
}
.details_name svg {
	vertical-align: middle;
}
.details_type {
	color: #8a8a8a;
	font-size: 8px;
	line-height: 13px;
}
.quote {
	display: flex;
	align-items: center;
	height: 28px;
	margin-top: 6px;
	font-size: 20px;
	font-weight: 700;
}
.quote small {
	margin-left: 3px;
	font-size: 8px;
	font-weight: 400;
	line-height: 10px;
}
.quote i {
	display: block;
	color: #d99530;
	font-style: normal;
}
.change {
	font-size: 11px;
	font-weight: 700;
	line-height: 14px;
	white-space: nowrap;
}
.market {
	display: flex;
	align-items: center;
	gap: 4px;
	padding-left: 3px;
	font-weight: 700;
	line-height: 15px;
}
.market i {
	width: 5px;
	height: 5px;
	border-radius: 50%;
	background: #3fa386;
}
.news {
	display: flex;
	align-items: center;
	gap: 5px;
	margin-top: 6px;
	padding: 3px 5px;
	border-radius: 5px;
	background: #2d2440;
	font-size: 8px;
	font-weight: 700;
	line-height: 11px;
}
.news span {
	flex: 1;
}
.news svg:first-child {
	stroke: #a674f0;
}
.collapse {
	position: absolute;
	top: 522px;
	left: -3px;
	width: 7px;
	height: 18px;
	background: #1c1c1c;
}

/* right rail */
.rail {
	position: relative;
	display: flex;
	flex-direction: column;
	align-items: center;
	gap: 5px;
	width: 30px;
	margin-left: 1px;
	padding: 3px 0 4px;
	background: #0f0f0f;
}
.rail button {
	display: flex;
	align-items: center;
	justify-content: center;
	width: 25px;
	height: 25px;
	flex: none;
	border-radius: 4px;
}
.rail .active {
	background: #3a3a3a;
}
.rail .push {
	margin-top: auto;
}
.rail .products {
	width: 22px;
	height: 22px;
	margin-top: 3px;
	border-radius: 50%;
	background: white;
}
.products svg {
	stroke: #111;
}
.rail i {
	width: 22px;
	height: 1px;
	margin: 3px 0 0;
	background: #444;
}
.drawer {
	position: absolute;
	right: -10px;
	bottom: 24px;
	display: flex;
	padding: 8px;
	border: 1px solid #333;
	border-radius: 50%;
	background: black;
}

/* taskbar */
.taskbar {
	position: relative;
	display: flex;
	align-items: center;
	justify-content: center;
	height: 32px;
	padding-bottom: 2px;
	border-top: 1px solid #383838;
	background: #222;
}
.apps_list {
	display: flex;
	align-items: center;
	justify-content: space-between;
	width: 724px;
}
.apps_list > * {
	width: 20px;
	height: 16px;
}
.apps_list svg {
	height: 16px;
	stroke: none;
}
.apps_list .running {
	display: flex;
	align-items: center;
	justify-content: center;
	width: 20px;
	height: 26px;
	border-bottom: 2px solid #58b4e0;
	background: #2d2d2d;
}
.running svg {
	width: 16px;
}
.tray {
	position: absolute;
	right: 12px;
	display: flex;
	align-items: center;
	gap: 12px;
	font-family: "Open Sans", sans-serif;
	font-size: 8px;
	line-height: 11px;
	text-align: center;
}
.mic {
	stroke: #4fb3a8;
}
.clock {
	text-align: right;
}
```
